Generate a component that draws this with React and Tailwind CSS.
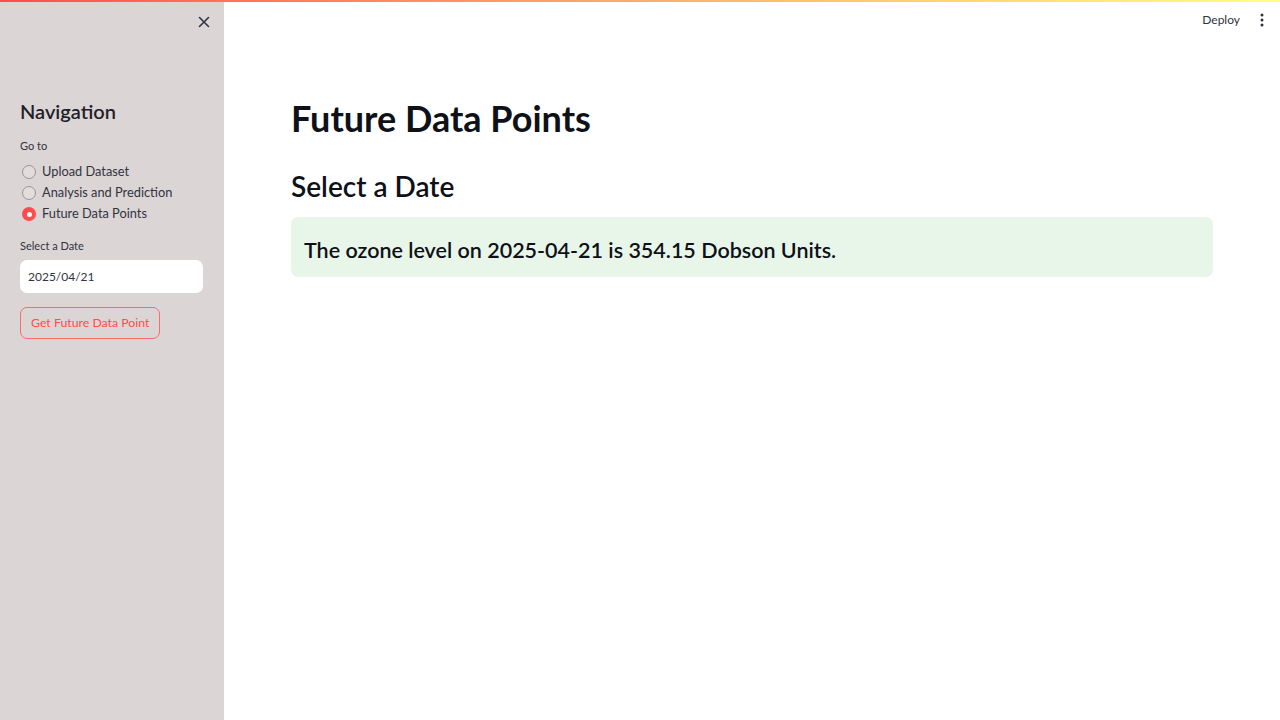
import React, { useState } from 'react';

const font = { fontFamily: 'Lato, "Noto Sans", sans-serif' };

const pages = ['Upload Dataset', 'Analysis and Prediction', 'Future Data Points'];

const Radio = ({ label, checked, onClick }) => (
  <label onClick={onClick} className="flex items-center gap-[6px] h-[21px] cursor-pointer">
    <span
      className={
        checked
          ? 'w-[14px] h-[14px] rounded-full bg-[#ff4b4b] flex items-center justify-center ml-[2px]'
          : 'w-[14px] h-[14px] rounded-full border border-[#9a9595] bg-[#e2dcdc] ml-[2px]'
      }
    >
      {checked && <span className="w-[5px] h-[5px] rounded-full bg-white"></span>}
    </span>
    <span className="text-[12.8px] text-[#31333f]">{label}</span>
  </label>
);

export default function App() {
  const [page, setPage] = useState('Future Data Points');

  return (
    <div className="relative h-screen w-full flex bg-white text-[#31333f] overflow-hidden" style={font}>
      <div className="absolute top-0 left-0 right-0 h-[2px] bg-gradient-to-r from-[#ff4b4b] to-[#ffff80] z-10"></div>

      <aside className="w-[224px] shrink-0 h-full bg-[#dcd5d5] px-[20px] pt-[12px]">
        <div className="flex justify-end mr-[-10px]">
          <button className="w-[20px] h-[20px] flex items-center justify-center text-[#31333f]">
            <svg width="12" height="12" viewBox="0 0 12 12" stroke="currentColor" strokeWidth="1.6" strokeLinecap="round">
              <path d="M1.5 1.5 L10.5 10.5 M10.5 1.5 L1.5 10.5" />
            </svg>
          </button>
        </div>
        <h2 className="mt-[66px] text-[20px] font-semibold text-[#1f2129] leading-[26px]">Navigation</h2>
        <div className="mt-[14px] text-[11px] text-[#31333f]">Go to</div>
        <div className="mt-[7px] flex flex-col">
          {pages.map((p) => (
            <Radio key={p} label={p} checked={page === p} onClick={() => setPage(p)} />
          ))}
        </div>
        <div className="mt-[13px] text-[11px] text-[#31333f]">Select a Date</div>
        <div className="mt-[6px] h-[33px] w-[183px] bg-white rounded-[7px] flex items-center px-[8px] text-[12px] text-[#31333f]">
          2025/04/21
        </div>
        <button className="mt-[14px] h-[32px] px-[10px] border border-[#ff6b6b] rounded-[7px] text-[12.3px] text-[#ff4b4b] bg-[#dcd5d5]">
          Get Future Data Point
        </button>
      </aside>

      <main className="flex-1 h-full flex flex-col">
        <header className="h-[40px] flex items-center justify-end pr-[16px] gap-[20px]">
          <span className="text-[12px] text-[#31333f]">Deploy</span>
          <svg width="4" height="14" viewBox="0 0 4 14" fill="#31333f">
            <circle cx="2" cy="2" r="1.5" />
            <circle cx="2" cy="7" r="1.5" />
            <circle cx="2" cy="12" r="1.5" />
          </svg>
        </header>
        <div className="px-[67px] pt-[52px]">
          <h1 className="text-[36px] font-bold text-[#0e1117] leading-[52px]">Future Data Points</h1>
          <h2 className="mt-[23px] text-[28px] font-semibold text-[#0e1117] leading-[38px]">Select a Date</h2>
          <div className="mt-[12px] h-[60px] rounded-[7px] bg-[#e8f6ea] flex items-center px-[13px] pt-[6px]">
            <span className="text-[21.5px] font-semibold text-[#0e1117]">
              The ozone level on 2025-04-21 is 354.15 Dobson Units.
            </span>
          </div>
        </div>
      </main>
    </div>
  );
}
